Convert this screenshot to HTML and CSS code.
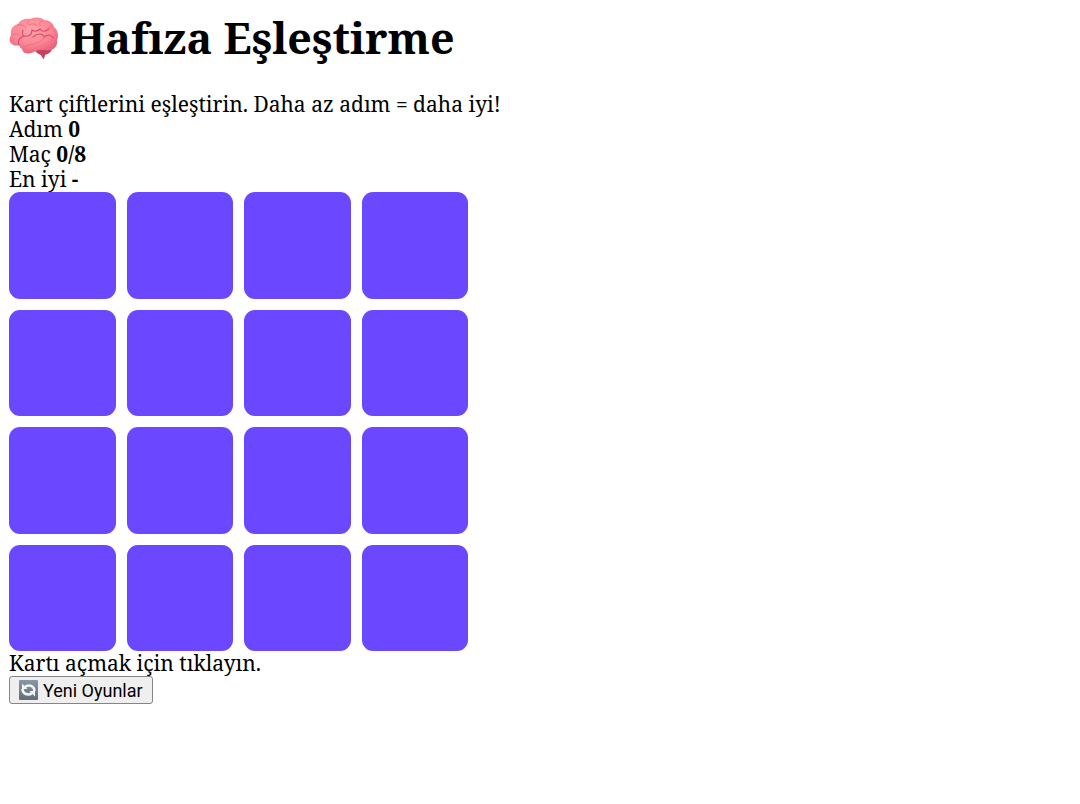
FILE: index.html
```
<!DOCTYPE html>
<html lang="tr">
<head>
    <meta charset="UTF-8">
    <meta name="viewport" content="width=device-width, initial-scale=1.0">
    <title>Hafıza Eşleştirme</title>
    <link rel="stylesheet" href="styles.css">
</head>
<body>
    <h1>
        <svg class="brain" viewBox="0 -1 50 44" aria-hidden="true">
            <defs>
                <radialGradient id="brainFill" cx="45%" cy="35%" r="65%">
                    <stop offset="0" stop-color="#ffa3ac"/>
                    <stop offset="0.6" stop-color="#fb8795"/>
                    <stop offset="1" stop-color="#e9637b"/>
                </radialGradient>
            </defs>
            <path fill="#c9405f" d="M25 31 C30 30 38 29 43 31 C43 35 39 37 36 38 L35 42 C34 42 33 40 32 38 C29 37 26 35 25 31Z"/>
            <path fill="url(#brainFill)" d="M3 27 C0 25 0 21 2 18 C1 13 4 8 9 7 C11 3 16 1 21 2 C26 0 31 0 35 3 C40 3 44 6 45 10 C49 13 50 19 48 23 C49 28 46 32 42 33 C36 34 31 32 27 34 C22 37 14 38 13 32 C10 30 11 29 10 28 C8 29 5 29 3 27Z"/>
            <g fill="none" stroke="#d94f6b" stroke-width="1.2" stroke-linecap="round">
                <path d="M10 28 C8 24 11 20 15 19 C13 18 13 16 14 13"/>
                <path d="M15 19 C19 20 23 18 23 13 C26 15 29 14 31 12 C33 15 36 15 40 12"/>
                <path d="M24 20 C28 16 34 16 35 20 C39 17 43 18 44 21"/>
            </g>
            <g fill="none" stroke="#ec7185" stroke-width="1" stroke-linecap="round">
                <path d="M15 31 C17 27 23 28 27 26 C31 25 34 24 35 20"/>
                <path d="M4 18 C7 16 10 17 11 19"/>
                <path d="M9 8 C13 7 16 9 17 11"/>
                <path d="M21 3 C18 4 18 6 20 8 C24 6 27 7 28 9"/>
                <path d="M34 4 C31 4 30 6 31 8"/>
                <path d="M44 10 C41 9 38 10 39 12"/>
                <path d="M42 31 C38 32 35 30 34 28"/>
            </g>
        </svg>
        Hafıza Eşleştirme
    </h1>
    <div>Kart çiftlerini eşleştirin. Daha az adım = daha iyi!</div>

    <div>Adım <b id="moves">0</b></div>
    <div>Maç <b id="matches">0/8</b></div>
    <div>En iyi <b id="best">-</b></div>

    <div class="grid" id="grid">
        <button class="card" aria-label="Kart 1"></button>
        <button class="card" aria-label="Kart 2"></button>
        <button class="card" aria-label="Kart 3"></button>
        <button class="card" aria-label="Kart 4"></button>
        <button class="card" aria-label="Kart 5"></button>
        <button class="card" aria-label="Kart 6"></button>
        <button class="card" aria-label="Kart 7"></button>
        <button class="card" aria-label="Kart 8"></button>
        <button class="card" aria-label="Kart 9"></button>
        <button class="card" aria-label="Kart 10"></button>
        <button class="card" aria-label="Kart 11"></button>
        <button class="card" aria-label="Kart 12"></button>
        <button class="card" aria-label="Kart 13"></button>
        <button class="card" aria-label="Kart 14"></button>
        <button class="card" aria-label="Kart 15"></button>
        <button class="card" aria-label="Kart 16"></button>
    </div>

    <div id="message">Kartı açmak için tıklayın.</div>
    <button class="restart" id="restart">
        <svg class="refresh" viewBox="0 0 20 20" aria-hidden="true">
            <defs>
                <linearGradient id="refreshFill" x1="0" y1="0" x2="0" y2="1">
                    <stop offset="0" stop-color="#8799a6"/>
                    <stop offset="1" stop-color="#626d75"/>
                </linearGradient>
            </defs>
            <rect width="19" height="20" rx="1" fill="url(#refreshFill)"/>
            <g fill="none" stroke="#f4f6f7" stroke-width="2.6">
                <path d="M15.500 11 C15.500 7.500 13 5.500 10 5.500 C8 5.500 7 6 6 7"/>
                <path d="M3.500 9 C3.500 12.500 6 14.500 9 14.500 C11 14.500 12 14 13 13"/>
            </g>
            <path fill="#f4f6f7" d="M3 3.500 V9 H8.500Z M16 16.500 V11 H10.500Z"/>
        </svg>
        Yeni Oyunlar
    </button>
</body>
</html>
```

FILE: styles.css
```
body {
    margin: 13px 9px;
    font-family: "Noto Serif", serif;
    font-size: 21px;
    line-height: 25px;
    color: #000;
    background: #fff;
}
h1 {
    display: flex;
    align-items: center;
    gap: 11px;
    margin: 0 0 29px;
    font-size: 43px;
    line-height: 50px;
}
.brain {
    width: 50px;
    height: 44px;
}
.grid {
    display: grid;
    grid-template-columns: repeat(4, 1fr);
    gap: 11px;
    max-width: 459px;
}
.card {
    aspect-ratio: 1;
    padding: 0;
    border: none;
    border-radius: 11px;
    background: #6b48ff;
    cursor: pointer;
}
.restart {
    display: flex;
    align-items: center;
    gap: 4px;
    height: 28px;
    padding: 0 9px;
    border: 1px solid #858585;
    border-radius: 3px;
    background: #efefef;
    color: #000;
    font-family: Roboto, sans-serif;
    font-size: 18px;
    cursor: pointer;
}
.restart:hover {
    background: #e5e5e5;
}
.refresh {
    width: 20px;
    height: 20px;
}
```
